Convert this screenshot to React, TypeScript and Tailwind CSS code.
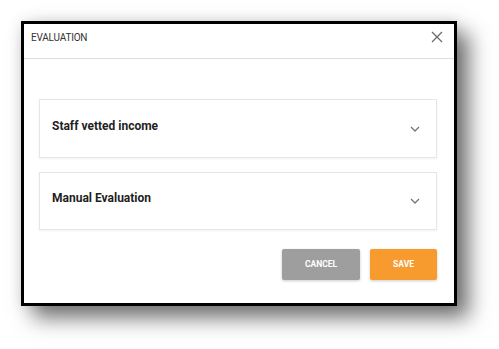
import React from "react";

const sections = ["Staff vetted income", "Manual Evaluation"];

const Chevron: React.FC = () => (
  <svg width="10" height="6" viewBox="0 0 10 6" fill="none" className="text-[#757575]">
    <path d="M1 1l4 4 4-4" stroke="currentColor" strokeWidth="1.3" />
  </svg>
);

const EvaluationDialog: React.FC = () => {
  return (
    <div className="w-[436px] h-[285px] bg-white border-[3px] border-black flex flex-col shadow-[12px_12px_20px_rgba(0,0,0,0.55),0_0_14px_rgba(0,0,0,0.12)]">
      <div className="h-[35px] flex items-start justify-between pl-[7px] pr-[11px] pt-[6px] border-b border-[#dedede]">
        <span className="text-[10px] text-[#333] tracking-[-0.2px]">EVALUATION</span>
        <button className="mt-[1px] text-[#6b6b6b]">
          <svg width="12" height="12" viewBox="0 0 12 12" fill="none">
            <path d="M1 1l10 10M11 1L1 11" stroke="currentColor" strokeWidth="1.3" />
          </svg>
        </button>
      </div>
      <div className="flex-1 flex flex-col pl-[15px] pr-[17px] pt-[40px]">
        <div className="flex flex-col gap-[14px]">
          {sections.map((title, i) => (
            <div
              key={title}
              className={`flex items-center justify-between pl-[12px] pr-[16px] bg-white border border-[#e6e6e6] shadow-[0_1px_2px_rgba(0,0,0,0.06)] ${i === 0 ? "h-[59px]" : "h-[58px]"}`}
            >
              <span className="text-[12px] font-bold text-[#1f1f1f] mb-[6px]">{title}</span>
              <Chevron />
            </div>
          ))}
        </div>
        <div className="flex justify-end gap-[10px] mt-[19px]">
          <button className="w-[78px] h-[31px] rounded-[2px] bg-[#9e9e9e] text-white text-[8.5px] font-bold shadow-[0_1px_3px_rgba(0,0,0,0.2)]">
            CANCEL
          </button>
          <button className="w-[67px] h-[31px] rounded-[2px] bg-[#f79b2f] text-white text-[8.5px] font-bold shadow-[0_1px_3px_rgba(0,0,0,0.2)]">
            SAVE
          </button>
        </div>
      </div>
    </div>
  );
};

export default function App() {
  return (
    <div className="w-[499px] h-[349px] bg-white pl-[21px] pt-[21px] font-['Roboto',sans-serif]">
      <EvaluationDialog />
    </div>
  );
}
